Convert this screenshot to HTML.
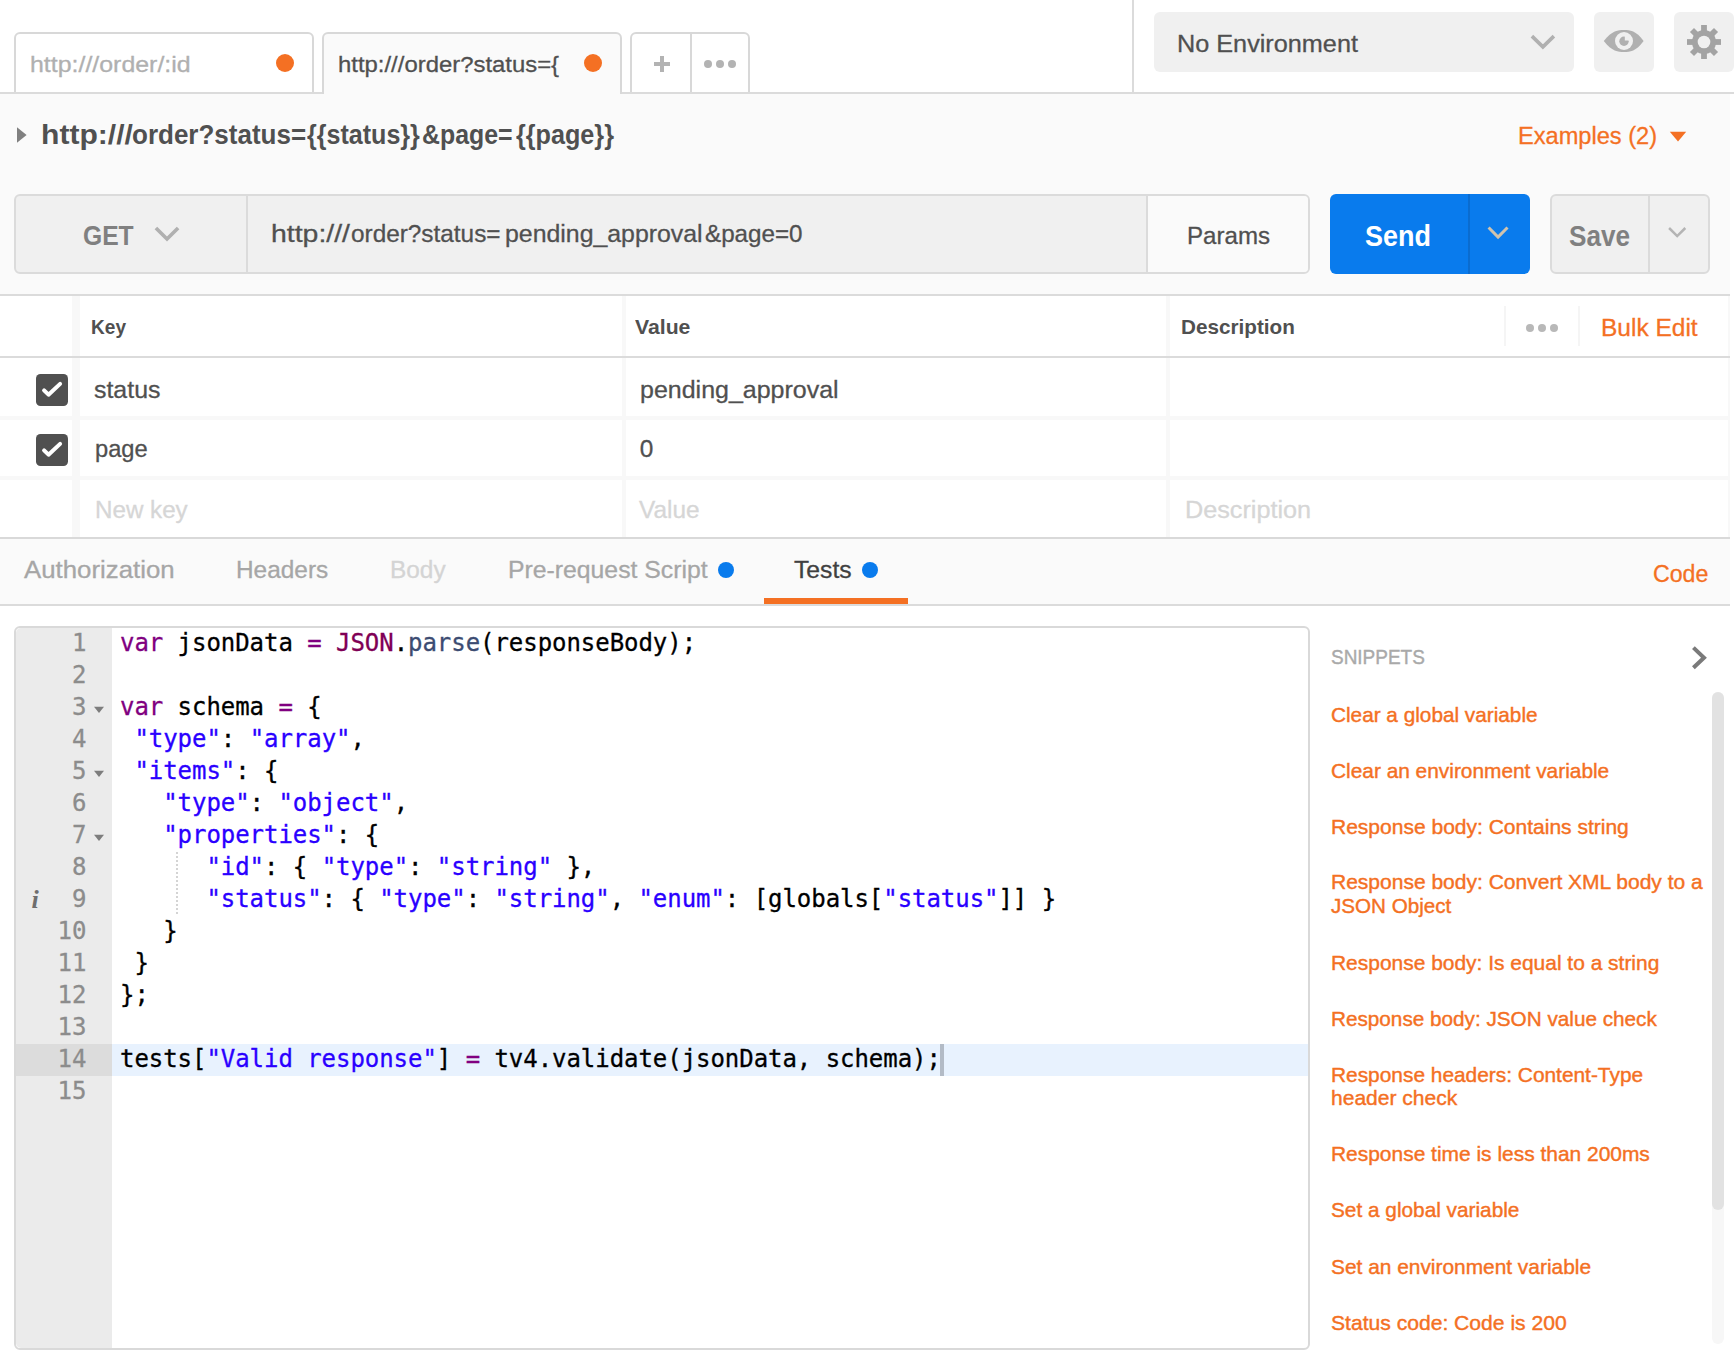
<!DOCTYPE html>
<html lang="en"><head><meta charset="utf-8"><title>Postman</title>
<style>
html,body{margin:0;padding:0;}
body{width:1734px;height:1370px;position:relative;overflow:hidden;background:#fff;font-family:"Liberation Sans",sans-serif;}
div,span.t,svg{position:absolute;}
div.seg{left:0;top:0;width:0;height:0;}
span.t{white-space:pre;display:block;transform-origin:0 0;}
.code span.t{font-family:"DejaVu Sans Mono","Liberation Mono",monospace;}
</style></head><body>
<div style="left:0px;top:94px;width:1730px;height:200px;background:#fafafa;"></div>
<div style="left:0px;top:92px;width:1730px;height:2px;background:#dbdbdb;"></div>
<div style="left:1132px;top:0px;width:2px;height:92px;background:#dbdbdb;"></div>
<div style="left:0px;top:294px;width:1730px;height:2px;background:#dbdbdb;"></div>
<div style="left:0px;top:356px;width:1730px;height:2px;background:#dbdbdb;"></div>
<div style="left:0px;top:537px;width:1730px;height:2px;background:#d9d9d9;"></div>
<div style="left:0px;top:539px;width:1730px;height:65px;background:#fafafa;"></div>
<div style="left:0px;top:604px;width:1730px;height:2px;background:#dbdbdb;"></div>
<div style="left:14px;top:32px;width:296px;height:66px;border:2px solid #d8d8d8;border-radius:6px 6px 0 0;background:#fff;clip-path:inset(0 0 8px 0);"></div>
<div style="left:0px;top:92px;width:322px;height:2px;background:#dbdbdb;"></div>
<div style="left:322px;top:32px;width:296px;height:66px;border:2px solid #d8d8d8;border-radius:6px 6px 0 0;background:#fafafa;clip-path:inset(0 0 8px 0);"></div>
<div style="left:324px;top:92px;width:296px;height:2px;background:#fafafa;"></div>
<div style="left:630px;top:32px;width:116px;height:66px;border:2px solid #d8d8d8;border-radius:6px 6px 0 0;background:#fff;clip-path:inset(0 0 8px 0);"></div>
<div style="left:690px;top:34px;width:2px;height:58px;background:#d8d8d8;"></div>
<div style="left:622px;top:92px;width:1112px;height:2px;background:#dbdbdb;"></div>
<span class="t" style="left:30.17px;top:53.73px;font-size:22.4px;line-height:22.4px;color:#b0b0b0;-webkit-text-stroke:0.3px #b0b0b0;transform:scaleX(1.1126);">http:///order/:id</span>
<span class="t" style="left:338.16px;top:53.73px;font-size:22.4px;line-height:22.4px;color:#505050;-webkit-text-stroke:0.3px #505050;transform:scaleX(1.0668);">http:///order?status={</span>
<div style="left:275.5px;top:54px;width:18px;height:18px;background:#f47023;border-radius:50%;"></div>
<div style="left:583.5px;top:54px;width:18px;height:18px;background:#f47023;border-radius:50%;"></div>
<div style="left:654px;top:62px;width:16px;height:4px;background:#b3b3b3;"></div>
<div style="left:660px;top:56px;width:4px;height:16px;background:#b3b3b3;"></div>
<div style="left:704px;top:60px;width:8px;height:8px;background:#b3b3b3;border-radius:50%;"></div>
<div style="left:716px;top:60px;width:8px;height:8px;background:#b3b3b3;border-radius:50%;"></div>
<div style="left:728px;top:60px;width:8px;height:8px;background:#b3b3b3;border-radius:50%;"></div>
<div style="left:1154px;top:12px;width:420px;height:60px;background:#f0f0f0;border-radius:6px;"></div>
<div style="left:1594px;top:12px;width:60px;height:60px;background:#f0f0f0;border-radius:6px;"></div>
<div style="left:1674px;top:12px;width:60px;height:60px;background:#f0f0f0;border-radius:6px;"></div>
<span class="t" style="left:1177.36px;top:31.64px;font-size:24.4px;line-height:24.4px;color:#505050;-webkit-text-stroke:0.3px #505050;transform:scaleX(1.0347);">No Environment</span>
<svg style="left:1528px;top:30px" width="32" height="24" viewBox="0 0 32 24"><path d="M3.9 6.1 L14.9 16.9 L25.9 6.1" fill="none" stroke="#b0b0b0" stroke-width="3.6"/></svg>
<svg style="left:1600px;top:26px" width="48" height="30" viewBox="0 0 48 30"><path d="M3.8 15 C12 4.5 18 4 24 4 C30 4 36 4.5 43.6 15 C36 25.5 30 26 24 26 C18 26 12 25.5 3.8 15 Z" fill="#b0b0b0"/><circle cx="24" cy="15" r="9" fill="#f0f0f0"/><circle cx="24" cy="15.3" r="4.7" fill="#b0b0b0"/><path d="M24 15.3 L24 10 A5.3 5.3 0 0 1 29.3 15.3 Z" fill="#f0f0f0" transform="translate(0.8,-0.8) scale(1) "/></svg>
<svg style="left:1684px;top:22px" width="40" height="40" viewBox="-20 -20 40 40"><g fill="#a3a3a3"><rect x="-2.9" y="-17" width="5.8" height="17" transform="rotate(0)"/><rect x="-2.9" y="-17" width="5.8" height="17" transform="rotate(45)"/><rect x="-2.9" y="-17" width="5.8" height="17" transform="rotate(90)"/><rect x="-2.9" y="-17" width="5.8" height="17" transform="rotate(135)"/><rect x="-2.9" y="-17" width="5.8" height="17" transform="rotate(180)"/><rect x="-2.9" y="-17" width="5.8" height="17" transform="rotate(225)"/><rect x="-2.9" y="-17" width="5.8" height="17" transform="rotate(270)"/><rect x="-2.9" y="-17" width="5.8" height="17" transform="rotate(315)"/><circle r="12.1"/></g><circle r="6.3" fill="#f0f0f0"/></svg>
<svg style="left:16px;top:126px" width="12" height="18" viewBox="0 0 12 18"><path d="M1 1.3 L10.6 9 L1 16.7 Z" fill="#808080"/></svg>
<div class="seg"><span class="t" style="left:40.90px;top:119.95px;font-size:28.4px;line-height:28.4px;font-weight:700;color:#505050;transform:scaleX(1.0599);">http:///</span><span class="t" style="left:132.10px;top:119.95px;font-size:28.4px;line-height:28.4px;font-weight:700;color:#505050;transform:scaleX(0.9159);">order?status=</span><span class="t" style="left:307.30px;top:119.95px;font-size:28.4px;line-height:28.4px;font-weight:700;color:#505050;transform:scaleX(0.8828);">{{status}}</span><span class="t" style="left:421.70px;top:119.95px;font-size:28.4px;line-height:28.4px;font-weight:700;color:#505050;transform:scaleX(0.8763);">&amp;page=</span><span class="t" style="left:516.10px;top:119.95px;font-size:28.4px;line-height:28.4px;font-weight:700;color:#505050;transform:scaleX(0.8869);">{{page}}</span></div>
<span class="t" style="left:1517.75px;top:123.54px;font-size:24.4px;line-height:24.4px;color:#f47023;-webkit-text-stroke:0.3px #f47023;transform:scaleX(0.9678);">Examples (2)</span>
<svg style="left:1669px;top:131px" width="18" height="12" viewBox="0 0 18 12"><path d="M0.8 0.8 L17.2 0.8 L9 10.6 Z" fill="#f47023"/></svg>
<div style="left:14px;top:194px;width:1292px;height:76px;border:2px solid #dbdbdb;border-radius:6px;background:#f0f0f0;"></div>
<div style="left:1148px;top:196px;width:160px;height:76px;background:#fafafa;border-radius:0 4px 4px 0;"></div>
<div style="left:246px;top:196px;width:2px;height:76px;background:#dbdbdb;"></div>
<div style="left:1146px;top:196px;width:2px;height:76px;background:#dbdbdb;"></div>
<span class="t" style="left:82.50px;top:221.35px;font-size:28.4px;line-height:28.4px;font-weight:700;color:#808080;transform:scaleX(0.8682);">GET</span>
<svg style="left:150px;top:222px" width="34" height="24" viewBox="0 0 34 24"><path d="M5.9 6 L17 17 L28.1 6" fill="none" stroke="#b0b0b0" stroke-width="3.7"/></svg>
<div class="seg"><span class="t" style="left:271.07px;top:221.64px;font-size:24.4px;line-height:24.4px;color:#505050;-webkit-text-stroke:0.3px #505050;transform:scaleX(1.1647);">http:///</span><span class="t" style="left:351.25px;top:221.64px;font-size:24.4px;line-height:24.4px;color:#505050;-webkit-text-stroke:0.3px #505050;transform:scaleX(0.9980);">order?status=</span><span class="t" style="left:504.65px;top:221.64px;font-size:24.4px;line-height:24.4px;color:#505050;-webkit-text-stroke:0.3px #505050;transform:scaleX(1.0191);">pending_approval</span><span class="t" style="left:704.75px;top:221.64px;font-size:24.4px;line-height:24.4px;color:#505050;-webkit-text-stroke:0.3px #505050;transform:scaleX(0.9923);">&amp;page=0</span></div>
<span class="t" style="left:1186.65px;top:224.44px;font-size:24.4px;line-height:24.4px;color:#505050;-webkit-text-stroke:0.3px #505050;transform:scaleX(0.9881);">Params</span>
<div style="left:1330px;top:194px;width:200px;height:80px;background:#097bed;border-radius:6px;"></div>
<div style="left:1468px;top:194px;width:2px;height:80px;background:#0a6cd0;"></div>
<span class="t" style="left:1365.30px;top:220.90px;font-size:30px;line-height:30px;font-weight:700;color:#fff;transform:scaleX(0.8989);">Send</span>
<svg style="left:1484px;top:222px" width="28" height="22" viewBox="0 0 28 22"><path d="M4.6 5.5 L14.05 15.1 L23.5 5.5" fill="none" stroke="#d0c3ae" stroke-width="3"/></svg>
<div style="left:1550px;top:194px;width:156px;height:76px;border:2px solid #dbdbdb;border-radius:6px;background:#f0f0f0;"></div>
<div style="left:1648px;top:196px;width:2px;height:76px;background:#dbdbdb;"></div>
<span class="t" style="left:1568.80px;top:220.90px;font-size:30px;line-height:30px;font-weight:700;color:#808080;transform:scaleX(0.8725);">Save</span>
<svg style="left:1664px;top:222px" width="26" height="20" viewBox="0 0 26 20"><path d="M5.1 6 L13.2 14.1 L21.3 6" fill="none" stroke="#b4b4b4" stroke-width="2.5"/></svg>
<div style="left:72px;top:296px;width:8px;height:60px;background:#f8f8f8;"></div>
<div style="left:622px;top:296px;width:4px;height:60px;background:#f8f8f8;"></div>
<div style="left:1166px;top:296px;width:4px;height:60px;background:#f8f8f8;"></div>
<div style="left:1728px;top:296px;width:2px;height:60px;background:#f8f8f8;"></div>
<div style="left:72px;top:358px;width:8px;height:58px;background:#f8f8f8;"></div>
<div style="left:622px;top:358px;width:4px;height:58px;background:#f8f8f8;"></div>
<div style="left:1166px;top:358px;width:4px;height:58px;background:#f8f8f8;"></div>
<div style="left:1728px;top:358px;width:2px;height:58px;background:#f8f8f8;"></div>
<div style="left:72px;top:420px;width:8px;height:56px;background:#f8f8f8;"></div>
<div style="left:622px;top:420px;width:4px;height:56px;background:#f8f8f8;"></div>
<div style="left:1166px;top:420px;width:4px;height:56px;background:#f8f8f8;"></div>
<div style="left:1728px;top:420px;width:2px;height:56px;background:#f8f8f8;"></div>
<div style="left:72px;top:480px;width:8px;height:57px;background:#f8f8f8;"></div>
<div style="left:622px;top:480px;width:4px;height:57px;background:#f8f8f8;"></div>
<div style="left:1166px;top:480px;width:4px;height:57px;background:#f8f8f8;"></div>
<div style="left:1728px;top:480px;width:2px;height:57px;background:#f8f8f8;"></div>
<div style="left:0px;top:416px;width:1730px;height:4px;background:#f8f8f8;"></div>
<div style="left:0px;top:476px;width:1730px;height:4px;background:#f8f8f8;"></div>
<div style="left:1504px;top:306px;width:2px;height:40px;background:#f5f5f5;"></div>
<div style="left:1578px;top:306px;width:2px;height:40px;background:#f5f5f5;"></div>
<span class="t" style="left:90.50px;top:316.86px;font-size:20.6px;line-height:20.6px;font-weight:700;color:#505050;transform:scaleX(0.9262);">Key</span>
<span class="t" style="left:634.80px;top:316.86px;font-size:20.6px;line-height:20.6px;font-weight:700;color:#505050;transform:scaleX(1.0294);">Value</span>
<span class="t" style="left:1180.50px;top:316.86px;font-size:20.6px;line-height:20.6px;font-weight:700;color:#505050;transform:scaleX(1.0044);">Description</span>
<div style="left:1526px;top:324px;width:8px;height:8px;background:#b8b8b8;border-radius:50%;"></div>
<div style="left:1538px;top:324px;width:8px;height:8px;background:#b8b8b8;border-radius:50%;"></div>
<div style="left:1550px;top:324px;width:8px;height:8px;background:#b8b8b8;border-radius:50%;"></div>
<span class="t" style="left:1600.95px;top:315.84px;font-size:24.4px;line-height:24.4px;color:#f47023;-webkit-text-stroke:0.3px #f47023;transform:scaleX(1.0041);">Bulk Edit</span>
<svg style="left:36px;top:374px" width="32" height="32" viewBox="0 0 32 32"><rect width="32" height="32" rx="4.5" fill="#505050"/><path d="M8.1 16.3 L12.5 20.7 L24.1 9.9" fill="none" stroke="#fff" stroke-width="4" stroke-linecap="round" stroke-linejoin="round"/></svg>
<svg style="left:36px;top:434px" width="32" height="32" viewBox="0 0 32 32"><rect width="32" height="32" rx="4.5" fill="#505050"/><path d="M8.1 16.3 L12.5 20.7 L24.1 9.9" fill="none" stroke="#fff" stroke-width="4" stroke-linecap="round" stroke-linejoin="round"/></svg>
<span class="t" style="left:94.35px;top:377.54px;font-size:24.4px;line-height:24.4px;color:#505050;-webkit-text-stroke:0.3px #505050;transform:scaleX(1.0211);">status</span>
<span class="t" style="left:640.05px;top:377.54px;font-size:24.4px;line-height:24.4px;color:#505050;-webkit-text-stroke:0.3px #505050;transform:scaleX(1.0243);">pending_approval</span>
<span class="t" style="left:94.65px;top:437.04px;font-size:24.4px;line-height:24.4px;color:#505050;-webkit-text-stroke:0.3px #505050;transform:scaleX(0.9709);">page</span>
<span class="t" style="left:639.65px;top:437.04px;font-size:24.4px;line-height:24.4px;color:#505050;-webkit-text-stroke:0.3px #505050;">0</span>
<span class="t" style="left:94.65px;top:497.54px;font-size:24.4px;line-height:24.4px;color:#d6d6d6;-webkit-text-stroke:0.3px #d6d6d6;transform:scaleX(0.9909);">New key</span>
<span class="t" style="left:639.05px;top:497.54px;font-size:24.4px;line-height:24.4px;color:#d6d6d6;-webkit-text-stroke:0.3px #d6d6d6;transform:scaleX(0.9997);">Value</span>
<span class="t" style="left:1184.66px;top:497.54px;font-size:24.4px;line-height:24.4px;color:#d6d6d6;-webkit-text-stroke:0.3px #d6d6d6;transform:scaleX(1.0337);">Description</span>
<span class="t" style="left:23.66px;top:558.04px;font-size:24.4px;line-height:24.4px;color:#a6a6a6;-webkit-text-stroke:0.3px #a6a6a6;transform:scaleX(1.0579);">Authorization</span>
<span class="t" style="left:236.45px;top:558.04px;font-size:24.4px;line-height:24.4px;color:#a6a6a6;-webkit-text-stroke:0.3px #a6a6a6;transform:scaleX(1.0004);">Headers</span>
<span class="t" style="left:390.05px;top:558.04px;font-size:24.4px;line-height:24.4px;color:#d4d4d4;-webkit-text-stroke:0.3px #d4d4d4;transform:scaleX(1.0002);">Body</span>
<span class="t" style="left:507.65px;top:558.04px;font-size:24.4px;line-height:24.4px;color:#a6a6a6;-webkit-text-stroke:0.3px #a6a6a6;transform:scaleX(1.0155);">Pre-request Script</span>
<span class="t" style="left:793.65px;top:558.04px;font-size:24.4px;line-height:24.4px;color:#404040;-webkit-text-stroke:0.3px #404040;transform:scaleX(1.0129);">Tests</span>
<div style="left:718px;top:562px;width:16px;height:16px;background:#097bed;border-radius:50%;"></div>
<div style="left:862px;top:562px;width:16px;height:16px;background:#097bed;border-radius:50%;"></div>
<div style="left:764px;top:598px;width:144px;height:6px;background:#f47023;"></div>
<span class="t" style="left:1652.94px;top:561.54px;font-size:24.4px;line-height:24.4px;color:#f47023;-webkit-text-stroke:0.3px #f47023;transform:scaleX(0.9500);">Code</span>
<div style="left:14px;top:626px;width:1292px;height:720px;border:2px solid #d9d9d9;border-radius:6px;background:#fff;"></div>
<div style="left:16px;top:628px;width:96px;height:720px;background:#ebebeb;border-radius:5px 0 0 5px;"></div>
<div style="left:16px;top:1044px;width:96px;height:32px;background:#dcdcdc;"></div>
<div style="left:112px;top:1044px;width:1196px;height:32px;background:#e8f2fe;"></div>
<div class="code" style="left:0;top:0;width:1734px;height:1370px;">
<span class="t" style="left:72.00px;top:630.89px;font-size:24px;line-height:24px;letter-spacing:-0.049px;color:#8c8c8c;-webkit-text-stroke:0.3px;">1</span>
<span class="t" style="left:120px;top:630.89px;font-size:24px;line-height:24px;letter-spacing:-0.049px;color:#000;-webkit-text-stroke:0.3px;"><span style="color:#800080">var</span><span style="color:#000"> jsonData </span><span style="color:#800080">=</span><span style="color:#000"> </span><span style="color:#7f0055">JSON</span><span style="color:#000">.</span><span style="color:#3c4c72">parse</span><span style="color:#000">(responseBody);</span></span>
<span class="t" style="left:72.00px;top:662.89px;font-size:24px;line-height:24px;letter-spacing:-0.049px;color:#8c8c8c;-webkit-text-stroke:0.3px;">2</span>
<span class="t" style="left:72.00px;top:694.89px;font-size:24px;line-height:24px;letter-spacing:-0.049px;color:#8c8c8c;-webkit-text-stroke:0.3px;">3</span>
<span class="t" style="left:120px;top:694.89px;font-size:24px;line-height:24px;letter-spacing:-0.049px;color:#000;-webkit-text-stroke:0.3px;"><span style="color:#800080">var</span><span style="color:#000"> schema </span><span style="color:#800080">=</span><span style="color:#000"> {</span></span>
<span class="t" style="left:72.00px;top:726.89px;font-size:24px;line-height:24px;letter-spacing:-0.049px;color:#8c8c8c;-webkit-text-stroke:0.3px;">4</span>
<span class="t" style="left:120px;top:726.89px;font-size:24px;line-height:24px;letter-spacing:-0.049px;color:#000;-webkit-text-stroke:0.3px;"><span style="color:#000"> </span><span style="color:#2a00ff">&quot;type&quot;</span><span style="color:#000">: </span><span style="color:#2a00ff">&quot;array&quot;</span><span style="color:#000">,</span></span>
<span class="t" style="left:72.00px;top:758.89px;font-size:24px;line-height:24px;letter-spacing:-0.049px;color:#8c8c8c;-webkit-text-stroke:0.3px;">5</span>
<span class="t" style="left:120px;top:758.89px;font-size:24px;line-height:24px;letter-spacing:-0.049px;color:#000;-webkit-text-stroke:0.3px;"><span style="color:#000"> </span><span style="color:#2a00ff">&quot;items&quot;</span><span style="color:#000">: {</span></span>
<span class="t" style="left:72.00px;top:790.89px;font-size:24px;line-height:24px;letter-spacing:-0.049px;color:#8c8c8c;-webkit-text-stroke:0.3px;">6</span>
<span class="t" style="left:120px;top:790.89px;font-size:24px;line-height:24px;letter-spacing:-0.049px;color:#000;-webkit-text-stroke:0.3px;"><span style="color:#000">   </span><span style="color:#2a00ff">&quot;type&quot;</span><span style="color:#000">: </span><span style="color:#2a00ff">&quot;object&quot;</span><span style="color:#000">,</span></span>
<span class="t" style="left:72.00px;top:822.89px;font-size:24px;line-height:24px;letter-spacing:-0.049px;color:#8c8c8c;-webkit-text-stroke:0.3px;">7</span>
<span class="t" style="left:120px;top:822.89px;font-size:24px;line-height:24px;letter-spacing:-0.049px;color:#000;-webkit-text-stroke:0.3px;"><span style="color:#000">   </span><span style="color:#2a00ff">&quot;properties&quot;</span><span style="color:#000">: {</span></span>
<span class="t" style="left:72.00px;top:854.89px;font-size:24px;line-height:24px;letter-spacing:-0.049px;color:#8c8c8c;-webkit-text-stroke:0.3px;">8</span>
<span class="t" style="left:120px;top:854.89px;font-size:24px;line-height:24px;letter-spacing:-0.049px;color:#000;-webkit-text-stroke:0.3px;"><span style="color:#000">      </span><span style="color:#2a00ff">&quot;id&quot;</span><span style="color:#000">: { </span><span style="color:#2a00ff">&quot;type&quot;</span><span style="color:#000">: </span><span style="color:#2a00ff">&quot;string&quot;</span><span style="color:#000"> },</span></span>
<span class="t" style="left:72.00px;top:886.89px;font-size:24px;line-height:24px;letter-spacing:-0.049px;color:#8c8c8c;-webkit-text-stroke:0.3px;">9</span>
<span class="t" style="left:120px;top:886.89px;font-size:24px;line-height:24px;letter-spacing:-0.049px;color:#000;-webkit-text-stroke:0.3px;"><span style="color:#000">      </span><span style="color:#2a00ff">&quot;status&quot;</span><span style="color:#000">: { </span><span style="color:#2a00ff">&quot;type&quot;</span><span style="color:#000">: </span><span style="color:#2a00ff">&quot;string&quot;</span><span style="color:#000">, </span><span style="color:#2a00ff">&quot;enum&quot;</span><span style="color:#000">: [globals[</span><span style="color:#2a00ff">&quot;status&quot;</span><span style="color:#000">]] }</span></span>
<span class="t" style="left:57.60px;top:918.89px;font-size:24px;line-height:24px;letter-spacing:-0.049px;color:#8c8c8c;-webkit-text-stroke:0.3px;">10</span>
<span class="t" style="left:120px;top:918.89px;font-size:24px;line-height:24px;letter-spacing:-0.049px;color:#000;-webkit-text-stroke:0.3px;"><span style="color:#000">   }</span></span>
<span class="t" style="left:57.60px;top:950.89px;font-size:24px;line-height:24px;letter-spacing:-0.049px;color:#8c8c8c;-webkit-text-stroke:0.3px;">11</span>
<span class="t" style="left:120px;top:950.89px;font-size:24px;line-height:24px;letter-spacing:-0.049px;color:#000;-webkit-text-stroke:0.3px;"><span style="color:#000"> }</span></span>
<span class="t" style="left:57.60px;top:982.89px;font-size:24px;line-height:24px;letter-spacing:-0.049px;color:#8c8c8c;-webkit-text-stroke:0.3px;">12</span>
<span class="t" style="left:120px;top:982.89px;font-size:24px;line-height:24px;letter-spacing:-0.049px;color:#000;-webkit-text-stroke:0.3px;"><span style="color:#000">};</span></span>
<span class="t" style="left:57.60px;top:1014.89px;font-size:24px;line-height:24px;letter-spacing:-0.049px;color:#8c8c8c;-webkit-text-stroke:0.3px;">13</span>
<span class="t" style="left:57.60px;top:1046.89px;font-size:24px;line-height:24px;letter-spacing:-0.049px;color:#8c8c8c;-webkit-text-stroke:0.3px;">14</span>
<span class="t" style="left:120px;top:1046.89px;font-size:24px;line-height:24px;letter-spacing:-0.049px;color:#000;-webkit-text-stroke:0.3px;"><span style="color:#000">tests[</span><span style="color:#2a00ff">&quot;Valid response&quot;</span><span style="color:#000">] </span><span style="color:#800080">=</span><span style="color:#000"> tv4.validate(jsonData, schema);</span></span>
<span class="t" style="left:57.60px;top:1078.89px;font-size:24px;line-height:24px;letter-spacing:-0.049px;color:#8c8c8c;-webkit-text-stroke:0.3px;">15</span>
</div>
<svg style="left:93px;top:706px" width="12" height="8" viewBox="0 0 12 8"><path d="M1 0.8 L11 0.8 L6 7 Z" fill="#7d7d7d"/></svg>
<svg style="left:93px;top:770px" width="12" height="8" viewBox="0 0 12 8"><path d="M1 0.8 L11 0.8 L6 7 Z" fill="#7d7d7d"/></svg>
<svg style="left:93px;top:834px" width="12" height="8" viewBox="0 0 12 8"><path d="M1 0.8 L11 0.8 L6 7 Z" fill="#7d7d7d"/></svg>
<div style="left:176px;top:852px;width:2px;height:64px;background:repeating-linear-gradient(to bottom,#d4d4d4 0 2px,transparent 2px 4px);"></div>
<div style="left:940px;top:1044px;width:4px;height:32px;background:#b3bbc6;"></div>
<span class="t" style="left:31.5px;top:886px;font-family:'Liberation Serif',serif;font-style:italic;font-weight:700;font-size:26px;line-height:28px;color:#6e6e6e;">i</span>
<span class="t" style="left:1330.68px;top:647.39px;font-size:20.8px;line-height:20.8px;color:#a9a9a9;-webkit-text-stroke:0.4px #a9a9a9;transform:scaleX(0.9120);">SNIPPETS</span>
<svg style="left:1687.3px;top:642px" width="24" height="32" viewBox="0 0 24 32"><path d="M6.4 5.6 L17 15.7 L6.4 25.8" fill="none" stroke="#7a7a7a" stroke-width="4"/></svg>
<div style="left:1712px;top:692px;width:12px;height:652px;background:#f7f7f7;border-radius:6px;"></div>
<div style="left:1712px;top:692px;width:12px;height:518px;background:#e2e2e2;border-radius:6px;"></div>
<span class="t" style="left:1330.90px;top:704.76px;font-size:20.6px;line-height:20.6px;color:#f47023;-webkit-text-stroke:0.4px #f47023;transform:scaleX(1.0079);">Clear a global variable</span>
<span class="t" style="left:1330.90px;top:760.66px;font-size:20.6px;line-height:20.6px;color:#f47023;-webkit-text-stroke:0.4px #f47023;transform:scaleX(1.0127);">Clear an environment variable</span>
<span class="t" style="left:1330.90px;top:816.56px;font-size:20.6px;line-height:20.6px;color:#f47023;-webkit-text-stroke:0.4px #f47023;transform:scaleX(1.0202);">Response body: Contains string</span>
<span class="t" style="left:1330.90px;top:872.36px;font-size:20.6px;line-height:20.6px;color:#f47023;-webkit-text-stroke:0.4px #f47023;transform:scaleX(1.0201);">Response body: Convert XML body to a</span>
<span class="t" style="left:1330.90px;top:896.26px;font-size:20.6px;line-height:20.6px;color:#f47023;-webkit-text-stroke:0.4px #f47023;transform:scaleX(1.0001);">JSON Object</span>
<span class="t" style="left:1330.90px;top:952.86px;font-size:20.6px;line-height:20.6px;color:#f47023;-webkit-text-stroke:0.4px #f47023;transform:scaleX(1.0170);">Response body: Is equal to a string</span>
<span class="t" style="left:1330.90px;top:1008.76px;font-size:20.6px;line-height:20.6px;color:#f47023;-webkit-text-stroke:0.4px #f47023;transform:scaleX(1.0058);">Response body: JSON value check</span>
<span class="t" style="left:1330.90px;top:1064.66px;font-size:20.6px;line-height:20.6px;color:#f47023;-webkit-text-stroke:0.4px #f47023;transform:scaleX(1.0135);">Response headers: Content-Type</span>
<span class="t" style="left:1330.90px;top:1088.46px;font-size:20.6px;line-height:20.6px;color:#f47023;-webkit-text-stroke:0.4px #f47023;transform:scaleX(1.0215);">header check</span>
<span class="t" style="left:1330.90px;top:1144.36px;font-size:20.6px;line-height:20.6px;color:#f47023;-webkit-text-stroke:0.4px #f47023;transform:scaleX(1.0166);">Response time is less than 200ms</span>
<span class="t" style="left:1330.90px;top:1200.46px;font-size:20.6px;line-height:20.6px;color:#f47023;-webkit-text-stroke:0.4px #f47023;transform:scaleX(1.0097);">Set a global variable</span>
<span class="t" style="left:1330.90px;top:1256.86px;font-size:20.6px;line-height:20.6px;color:#f47023;-webkit-text-stroke:0.4px #f47023;transform:scaleX(1.0139);">Set an environment variable</span>
<span class="t" style="left:1330.90px;top:1312.76px;font-size:20.6px;line-height:20.6px;color:#f47023;-webkit-text-stroke:0.4px #f47023;transform:scaleX(1.0243);">Status code: Code is 200</span>
</body></html>
